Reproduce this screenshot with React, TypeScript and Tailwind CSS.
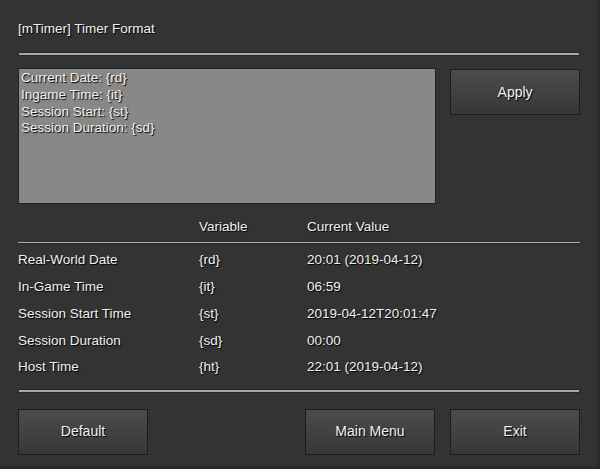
import React from "react";

const shadow = { textShadow: "1px 1px 1px #000" };

function Btn({ label, className = "" }: { label: string; className?: string }) {
  return (
    <div
      className={`h-[46px] w-[130px] flex items-center justify-center border border-[#1c1c1c] bg-gradient-to-b from-[#4c4c4c] to-[#373737] text-[14px] text-[#f2f2f2] ${className}`}
      style={shadow}
    >
      {label}
    </div>
  );
}

function Sep() {
  return <div className="h-[4px] border border-[#262626] bg-[#a9a9a9]" />;
}

const rows = [
  ["Real-World Date", "{rd}", "20:01 (2019-04-12)"],
  ["In-Game Time", "{it}", "06:59"],
  ["Session Start Time", "{st}", "2019-04-12T20:01:47"],
  ["Session Duration", "{sd}", "00:00"],
  ["Host Time", "{ht}", "22:01 (2019-04-12)"],
];

export default function App() {
  return (
    <div
      className="w-[600px] h-[469px] bg-[#333333] border-r-[3px] border-b-[3px] border-[#2a2a2a] text-[#f0f0f0] text-[13.5px] flex flex-col px-[18px] pr-[17px]"
      style={{ fontFamily: '"Liberation Sans", Arial, sans-serif' }}
    >
      <div className="h-[52px] flex items-center pt-[6px]" style={shadow}>
        [mTimer] Timer Format
      </div>
      <Sep />
      <div className="flex mt-[12px] gap-[14px]">
        <div className="w-[419px] h-[136px] bg-[#888888] border border-[#222] px-[2px] pt-[1px] leading-[16.8px]" style={shadow}>
          <div>Current Date: {"{rd}"}</div>
          <div>Ingame Time: {"{it}"}</div>
          <div>Session Start: {"{st}"}</div>
          <div>Session Duration: {"{sd}"}</div>
        </div>
        <Btn label="Apply" className="mt-[1px]" />
      </div>
      <div className="flex h-[36px] items-end pb-[5px] mt-[2px]" style={shadow}>
        <div className="w-[181px]" />
        <div className="w-[108px]">Variable</div>
        <div>Current Value</div>
      </div>
      <div className="h-[2px] border-b border-[#262626] bg-[#b0b0b0]" />
      <div className="flex flex-col pt-[3px]" style={shadow}>
        {rows.map((r) => (
          <div key={r[0]} className="flex h-[26.75px] items-center">
            <div className="w-[181px]">{r[0]}</div>
            <div className="w-[108px]">{r[1]}</div>
            <div>{r[2]}</div>
          </div>
        ))}
      </div>
      <div className="mt-[8px]">
        <Sep />
      </div>
      <div className="flex mt-[16px]">
        <Btn label="Default" />
        <div className="flex-1" />
        <Btn label="Main Menu" />
        <Btn label="Exit" className="ml-[15px]" />
      </div>
    </div>
  );
}
